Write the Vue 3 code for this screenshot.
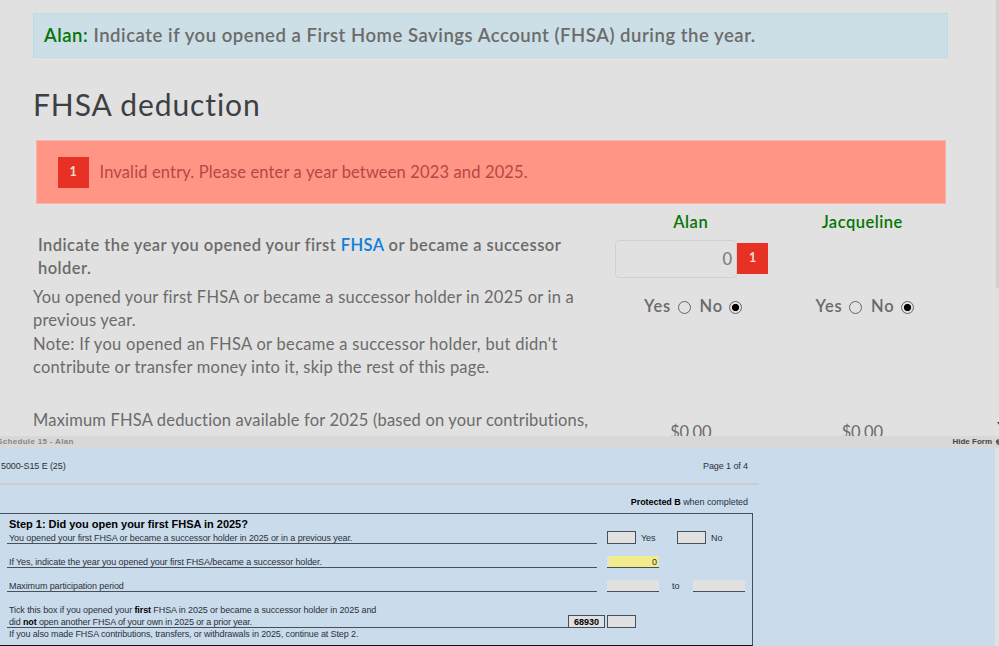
<template>
  <div class="screen">
    <main class="interview">
      <!-- Page scrollbar -->
      <div class="scrollbar"></div>
      <span class="scroll-arrow"></span>

      <div class="banner">
        <span class="person">Alan:</span> <span>Indicate if you opened a First Home Savings Account (FHSA) during the year.</span>
      </div>

      <h1 class="title">FHSA deduction</h1>

      <!-- Error Message -->
      <div class="alert">
        <span class="badge">1</span>
        <span class="alert-text">Invalid entry. Please enter a year between 2023 and 2025.</span>
      </div>

      <div class="row head-row">
        <div class="question"></div>
        <div v-for="name in people" :key="name" class="cell person">{{ name }}</div>
      </div>

      <div class="row year-row">
        <div class="question strong">
          Indicate the year you opened your first <a href="#" @click.prevent>FHSA</a> or became a successor<br />holder.
        </div>
        <div class="cell year-cell">
          <input v-model="openedYear" type="text" class="year-input" />
          <span class="badge">1</span>
        </div>
        <div class="cell"></div>
      </div>

      <div class="row radio-row">
        <div class="question">
          You opened your first FHSA or became a successor holder in 2025 or in a<br />previous year.<br />
          <span class="note">Note: If you opened an FHSA or became a successor holder, but didn't</span><br />contribute or transfer money into it, skip the rest of this page.
        </div>
        <div v-for="name in people" :key="name" class="cell radios">
          <label>Yes<input v-model="answers[name]" type="radio" :name="name" value="yes" /></label>
          <label>No<input v-model="answers[name]" type="radio" :name="name" value="no" /></label>
        </div>
      </div>

      <div class="row amount-row">
        <div class="question max">Maximum FHSA deduction available for 2025 (based on your contributions,</div>
        <div v-for="name in people" :key="name" class="cell amount">$0.00</div>
      </div>
    </main>

    <div class="form-bar">
      <span class="form-name">Schedule 15 - Alan</span>
      <span class="hide-form">Hide Form <i class="hide-icon"></i></span>
    </div>

    <section class="form-pane">
      <div class="sheet">
        <div class="sheet-head">
          <span>5000-S15 E (25)</span>
          <span class="page-no">Page 1 of 4</span>
        </div>
        <div class="protected"><b>Protected B</b> when completed</div>

        <div class="step">
          <h2>Step 1: Did you open your first FHSA in 2025?</h2>
          <div class="line">
            <div class="line-text">You opened your first FHSA or became a successor holder in 2025 or in a previous year.</div>
            <span class="box"></span><span class="box-label yes">Yes</span>
            <span class="box"></span><span class="box-label">No</span>
          </div>
          <div class="line gap">
            <div class="line-text">If Yes, indicate the year you opened your first FHSA/became a successor holder.</div>
            <span class="field active"><span>0</span></span>
          </div>
          <div class="line gap">
            <div class="line-text">Maximum participation period</div>
            <span class="field"></span><span class="to">to</span><span class="field"></span>
          </div>
          <div class="plain gap">Tick this box if you opened your <b>first</b> FHSA in 2025 or became a successor holder in 2025 and</div>
          <div class="line">
            <div class="line-text short">did <b>not</b> open another FHSA of your own in 2025 or a prior year.</div>
            <span class="box code">68930</span><span class="box"></span>
          </div>
          <div class="plain last">If you also made FHSA contributions, transfers, or withdrawals in 2025, continue at Step 2.</div>
        </div>
      </div>
    </section>
  </div>
</template>

<script setup>
import { ref, reactive } from 'vue'

const people = ['Alan', 'Jacqueline']
const openedYear = ref('0')
const answers = reactive({ Alan: 'no', Jacqueline: 'no' })
</script>

<style>
body {
  background: #e1e1e1;
  overflow: hidden;
}
</style>

<style scoped>
* {
  box-sizing: border-box;
}

.screen {
  width: 999px;
  height: 646px;
  overflow: hidden;
  display: flex;
  flex-direction: column;
  background: #e1e1e1;
}

.interview {
  position: relative;
  height: 436px;
  flex: none;
  overflow: hidden;
  padding: 13px 51px 0 33px;
  font: 400 16.5px/23.5px Lato, "Open Sans", sans-serif;
  font-variant-ligatures: none;
  letter-spacing: 0.21px;
  color: #6b6b6b;
  white-space: nowrap;
}

.scrollbar {
  position: absolute;
  top: 0;
  right: 0;
  width: 3px;
  height: 288px;
  background: #d1d1d1;
}

.scroll-arrow {
  position: absolute;
  top: 422px;
  right: -4px;
  border: 3px solid transparent;
  border-top: 4px solid #444;
  border-bottom: 0;
}

.banner {
  height: 45px;
  padding-left: 10px;
  border: 1px solid #b9dde5;
  background: #ccdee6;
  font-size: 18.5px;
  font-weight: 600;
  line-height: 43px;
  letter-spacing: 0.54px;
}

.person {
  color: #067506;
  font-weight: 600;
  letter-spacing: 0.5px;
}

.banner .person {
  letter-spacing: 0.55px;
}

.title {
  margin: 26px 0 0;
  height: 40px;
  font-size: 30px;
  font-weight: 400;
  line-height: 40px;
  letter-spacing: 0.9px;
  color: #3c4043;
}

.alert {
  display: flex;
  align-items: center;
  height: 64px;
  width: 910px;
  margin: 16px 0 0 2.5px;
  padding-left: 21px;
  border: 1px solid #f9b3ab;
  background: #ff9585;
  color: #b94545;
}

.alert-text {
  margin: 2px 0 0 11px;
  letter-spacing: 0.14px;
}

.badge {
  flex: none;
  width: 31px;
  height: 31px;
  background: #e73124;
  color: #f5dcd8;
  font-size: 12.5px;
  font-weight: 700;
  line-height: 29px;
  letter-spacing: 0;
  text-align: center;
}

.row {
  display: flex;
}

.question {
  width: 572px;
}

.cell {
  width: 171.5px;
  text-align: center;
}

.head-row {
  height: 28px;
  padding-top: 7px;
}

.year-row {
  height: 52px;
}

.year-row .question {
  padding: 1.5px 0 0 5px;
}

.strong {
  font-weight: 600;
  letter-spacing: 0.45px;
}

.strong a {
  color: #0a80dc;
  text-decoration: none;
}

.year-cell {
  display: flex;
  padding: 8px 0 0 10px;
  text-align: left;
}

.year-input {
  flex: none;
  width: 122px;
  height: 38px;
  padding: 0 4px;
  border: 1px solid #d0d0d0;
  border-radius: 4px;
  background: transparent;
  color: #777;
  font: inherit;
  text-align: right;
}

.year-cell .badge {
  margin-top: 3px;
}

.radio-row {
  height: 124px;
}

.radio-row .question {
  padding-top: 1.5px;
}

.note {
  letter-spacing: 0.3px;
}

.radios {
  display: flex;
  justify-content: center;
  gap: 9px;
  padding: 11px 0 0 5px;
  font-weight: 600;
  letter-spacing: 0.8px;
}

.radios label {
  display: flex;
}

.radios input {
  appearance: none;
  width: 13px;
  height: 13px;
  margin: 6px 0 0 6.5px;
  border: 1px solid #666;
  border-radius: 50%;
}

.radios input:checked {
  background: radial-gradient(circle, #000 3.2px, transparent 4px);
}

.max {
  padding-top: 1px;
  letter-spacing: 0.18px;
}

.amount {
  padding-top: 13px;
  letter-spacing: -0.2px;
}

.form-bar {
  display: flex;
  justify-content: space-between;
  flex: none;
  height: 11.5px;
  background: #d8d8d8;
  font: 700 8px/12px "Liberation Sans", Arial, sans-serif;
  white-space: nowrap;
}

.form-name {
  margin-left: -3px;
  color: #858585;
  letter-spacing: 0.33px;
}

.hide-form {
  display: flex;
  margin-right: -3px;
  color: #444;
}

.hide-icon {
  width: 6px;
  height: 6px;
  margin: 3px 0 0 4px;
  border: 2px dotted #444;
  border-radius: 50%;
  background: #777;
}

.form-pane {
  flex: 1;
  margin-right: 4px;
  background: #cadbec;
  font: 400 9px/12px "Liberation Sans", Arial, sans-serif;
  letter-spacing: -0.1px;
  color: #2c3138;
  white-space: nowrap;
}

.sheet {
  width: 759px;
}

.sheet-head {
  display: flex;
  justify-content: space-between;
  height: 37.5px;
  padding: 12.5px 11px 0 1px;
  border-bottom: 2px solid #ccc;
}

.protected {
  height: 28px;
  padding: 11px 11px 0 0;
  text-align: right;
  letter-spacing: -0.05px;
}

b {
  color: #000;
}

.step {
  width: 753px;
  height: 133px;
  padding: 3px 0 0 7px;
  border: 1px solid #45505a;
  border-right-width: 1.5px;
  border-bottom-color: #111;
  border-left: 0;
}

.step h2 {
  margin: 0;
  height: 15px;
  padding-left: 2px;
  font-size: 11px;
  line-height: 14px;
  letter-spacing: -0.02px;
  color: #000;
}

.line {
  display: flex;
  height: 12px;
}

.line-text {
  width: 590px;
  margin-right: 10px;
  padding-left: 2px;
  border-bottom: 1px solid #45505a;
}

.short {
  width: 561px;
  margin-right: 0;
  letter-spacing: -0.14px;
}

.gap {
  margin-top: 12px;
}

.box {
  width: 29px;
  height: 13px;
  margin-top: -1px;
  border: 1px solid #45505a;
  background: #e1e1e1;
}

.code {
  width: 37px;
  margin-right: 2px;
  color: #000;
  font-weight: 700;
  text-align: center;
  letter-spacing: 0;
}

.box-label {
  margin-left: 5px;
}

.yes {
  width: 36px;
}

.field {
  width: 52px;
  height: 12px;
  border-bottom: 1px solid #45505a;
  background: #e1e1e1;
}

.active {
  padding: 0 1px 0 2px;
}

.active span {
  display: block;
  height: 11px;
  padding-right: 1px;
  background: #f3ec8c;
  text-align: right;
}

.to {
  width: 34px;
  padding-left: 13px;
}

.plain {
  height: 12px;
  padding-left: 2px;
}

.last {
  letter-spacing: -0.12px;
}
</style>
